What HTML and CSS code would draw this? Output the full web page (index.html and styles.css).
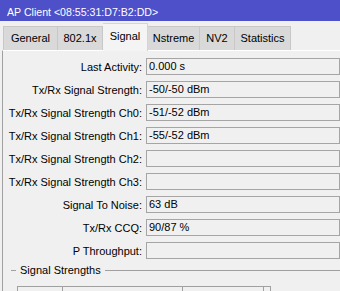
FILE: index.html
```html
<!DOCTYPE html>
<html lang="en">
<head>
  <meta charset="UTF-8" />
  <title>AP Client</title>
  <link rel="stylesheet" href="styles.css">
</head>
<body>
  <div class="titlebar">AP Client &lt;08:55:31:D7:B2:DD&gt;</div>

  <div class="tabs">
    <div class="tab tab-general">General</div>
    <div class="tab tab-8021x">802.1x</div>
    <div class="tab tab-signal active">Signal</div>
    <div class="tab tab-nstreme">Nstreme</div>
    <div class="tab tab-nv2">NV2</div>
    <div class="tab tab-stats">Statistics</div>
  </div>

  <div class="panel">
    <div class="form">
      <div class="row"><span class="label">Last Activity:</span><div class="field">0.000 s</div></div>
      <div class="row"><span class="label">Tx/Rx Signal Strength:</span><div class="field">-50/-50 dBm</div></div>
      <div class="row"><span class="label">Tx/Rx Signal Strength Ch0:</span><div class="field">-51/-52 dBm</div></div>
      <div class="row"><span class="label">Tx/Rx Signal Strength Ch1:</span><div class="field">-55/-52 dBm</div></div>
      <div class="row"><span class="label">Tx/Rx Signal Strength Ch2:</span><div class="field"></div></div>
      <div class="row"><span class="label">Tx/Rx Signal Strength Ch3:</span><div class="field"></div></div>
      <div class="row"><span class="label">Signal To Noise:</span><div class="field">63 dB</div></div>
      <div class="row"><span class="label">Tx/Rx CCQ:</span><div class="field">90/87 %</div></div>
      <div class="row"><span class="label">P Throughput:</span><div class="field"></div></div>
    </div>

    <div class="group">
      <div class="group-title">
        <span class="dash"></span>
        <span class="legend">Signal Strengths</span>
        <span class="rule"></span>
      </div>
      <table class="grid">
        <tr>
          <th class="col-rate">Rate</th>
          <th class="col-strength">Strength</th>
          <th class="col-last">Last Measured</th>
          <th></th>
        </tr>
      </table>
    </div>
  </div>
</body>
</html>
```

FILE: styles.css
```css
body {
  margin: 0;
  background-color: #f0f0f0;
  font-family: "Liberation Sans", Arial, sans-serif;
  font-size: 11px;
  color: #000000;
  overflow: hidden;
}
.titlebar {
  height: 21px;
  box-sizing: border-box;
  padding: 3px 0 0 7px;
  line-height: 18px;
  background-color: #4d50c9;
  color: #ffffff;
  font-size: 10.6px;
}
.tabs {
  display: flex;
  align-items: flex-end;
  height: 29px;
  padding-left: 3px;
  position: relative;
  z-index: 1;
}
.tab {
  height: 24px;
  box-sizing: border-box;
  line-height: 23px;
  text-align: center;
  background-color: #d9d9d9;
  border: 1px solid #c8c8c8;
  border-bottom: none;
  border-left: none;
}
.tab-general {
  width: 55px;
  border-left: 1px solid #c8c8c8;
}
.tab-8021x { width: 45px; }
.tab-signal { width: 45px; }
.tab-nstreme { width: 52px; }
.tab-nv2 { width: 35px; }
.tab-stats { width: 56px; }
.tab.active {
  height: 28px;
  line-height: 25px;
  background-color: #f4f4f4;
  border-color: #d4d4d4;
  margin-bottom: -1px;
}
.panel {
  margin-left: 2px;
  border-top: 1px solid #ffffff;
  border-left: 1px solid #a0a0a0;
  height: 240px;
}
.form {
  display: flex;
  flex-direction: column;
  gap: 6px;
  padding-top: 7px;
}
.row {
  display: flex;
  align-items: center;
  height: 17px;
}
.label {
  width: 139px;
  text-align: right;
  padding-right: 4px;
}
.field {
  flex: 1;
  height: 17px;
  box-sizing: border-box;
  border: 1px solid #a5a5a5;
  padding-left: 2px;
  line-height: 15px;
  color: #000000;
}
.group {
  padding: 4px 0 0 8px;
}
.group-title {
  display: flex;
  align-items: center;
  height: 14px;
}
.dash {
  width: 5px;
  border-top: 1px solid #a0a0a0;
  margin-right: 4px;
}
.legend {
  padding-right: 4px;
}
.rule {
  flex: 1;
  border-top: 1px solid #a0a0a0;
}
.grid {
  margin: 9px 0 0 6px;
  border-collapse: collapse;
  font-size: 11px;
}
.grid th {
  font-weight: normal;
  text-align: left;
  padding: 1px 3px;
  height: 18px;
  border: 1px solid #a0a0a0;
  border-bottom: none;
}
.col-rate { width: 38px; }
.col-strength { width: 113px; }
.col-last { width: 74px; }
```
